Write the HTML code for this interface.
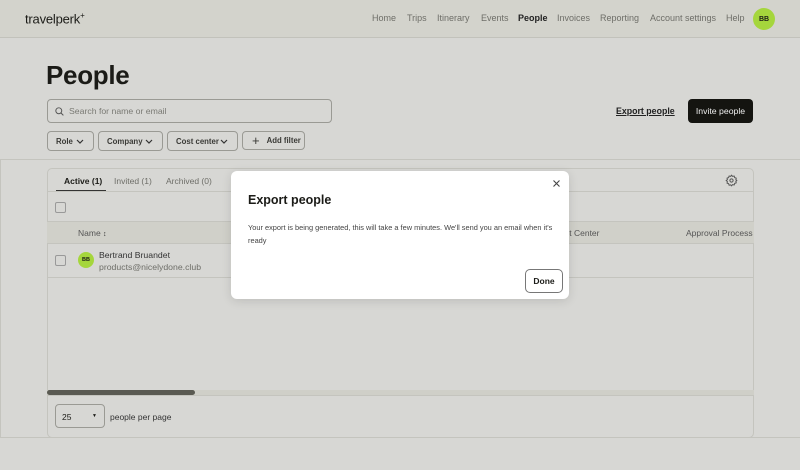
<!DOCTYPE html>
<html><head><style>
*{box-sizing:border-box;margin:0;padding:0}
body{width:800px;height:470px;overflow:hidden;background:#d7d7d4;font-family:"Liberation Sans",sans-serif;color:#1b1b17;position:relative}
.abs{position:absolute}
.hdr{left:0;top:0;width:800px;height:38px;background:#d3d3cc;border-bottom:1px solid #c2c2bb}
.nav{top:13px;font-size:9px;color:#6e6e68}
.btn{border:1px solid #9a9a94;border-radius:4px;font-size:7.8px;font-weight:bold;color:#3a3a36;display:flex;align-items:center}
.chev{margin-left:auto;margin-right:9px}
</style></head><body>
<div class="abs hdr"></div>
<div class="abs" style="left:25px;top:11px;font-size:13px;letter-spacing:-0.2px">travelperk<sup style="font-size:8px">+</sup></div>
<div class="abs nav" style="left:372px">Home</div>
<div class="abs nav" style="left:407px">Trips</div>
<div class="abs nav" style="left:437px">Itinerary</div>
<div class="abs nav" style="left:481px">Events</div>
<div class="abs nav" style="left:518px;color:#222;font-weight:bold">People</div>
<div class="abs nav" style="left:557px">Invoices</div>
<div class="abs nav" style="left:600px">Reporting</div>
<div class="abs nav" style="left:650px">Account settings</div>
<div class="abs nav" style="left:726px">Help</div>
<div class="abs" style="left:753px;top:8px;width:22px;height:22px;border-radius:50%;background:#a5d63c;font-size:7px;font-weight:bold;display:flex;align-items:center;justify-content:center">BB</div>

<div class="abs" style="left:46px;top:60px;font-size:26px;font-weight:bold;letter-spacing:-0.3px">People</div>
<div class="abs" style="left:47px;top:99px;width:285px;height:24px;border:1px solid #9a9a94;border-radius:4px;font-size:8.7px;color:#7a7a74;padding:6px 0 0 21px">Search for name or email
<svg class="abs" style="left:7px;top:7px" width="9" height="9" viewBox="0 0 10 10"><circle cx="4.2" cy="4.2" r="3.3" fill="none" stroke="#555" stroke-width="1.1"/><path d="M6.7 6.7L9.3 9.3" stroke="#555" stroke-width="1.1"/></svg></div>
<div class="abs" style="left:616px;top:106px;font-size:8.8px;font-weight:bold;text-decoration:underline;color:#222">Export people</div>
<div class="abs" style="left:688px;top:99px;width:65px;height:24px;background:#141410;border-radius:4px;color:#eee;font-size:8.7px;display:flex;align-items:center;justify-content:center">Invite people</div>

<div class="abs btn" style="left:47px;top:131px;width:47px;height:20px;padding-left:8px">Role <svg class="chev" width="8" height="5" viewBox="0 0 8 5"><path d="M1 1l3 3 3-3" fill="none" stroke="#333" stroke-width="1.2"/></svg></div>
<div class="abs btn" style="left:98px;top:131px;width:65px;height:20px;padding-left:8px">Company <svg class="chev" width="8" height="5" viewBox="0 0 8 5"><path d="M1 1l3 3 3-3" fill="none" stroke="#333" stroke-width="1.2"/></svg></div>
<div class="abs btn" style="left:167px;top:131px;width:71px;height:20px;padding-left:8px">Cost center <svg class="chev" width="8" height="5" viewBox="0 0 8 5"><path d="M1 1l3 3 3-3" fill="none" stroke="#333" stroke-width="1.2"/></svg></div>
<div class="abs btn" style="left:242px;top:131px;width:63px;height:19px;padding-left:9px"><span style="font-size:13px;font-weight:normal;margin-right:7px">+</span>Add filter</div>

<div class="abs" style="left:0;top:159px;width:800px;height:279px;border-top:1px solid #c4c4be;border-bottom:1px solid #c4c4be;border-left:1px solid #c4c4be"></div>
<div class="abs" style="left:47px;top:168px;width:707px;height:270px;border:1px solid #c4c4be;border-radius:5px"></div>
<div class="abs" style="left:47px;top:191px;width:707px;border-top:1px solid #c4c4be"></div>
<div class="abs" style="left:56px;top:190px;width:50px;border-top:1.5px solid #333"></div>
<div class="abs" style="left:64px;top:176px;font-size:8.5px;font-weight:bold">Active (1)</div>
<div class="abs" style="left:114px;top:176px;font-size:8.5px;color:#6e6e68">Invited (1)</div>
<div class="abs" style="left:166px;top:176px;font-size:8.5px;color:#6e6e68">Archived (0)</div>
<svg class="abs" style="left:725px;top:174px" width="13" height="13" viewBox="0 0 24 24"><path d="M12 2l2 2.5 3-.8.8 3 3 .8-.8 3L22 12l-2 1.5.8 3-3 .8-.8 3-3-.8L12 22l-1.5-2-3 .8-.8-3-3-.8.8-3L2 12l2.5-1.5-.8-3 3-.8.8-3 3 .8z" fill="none" stroke="#555" stroke-width="1.8" stroke-linejoin="round"/><circle cx="12" cy="12" r="3" fill="none" stroke="#555" stroke-width="1.8"/></svg>
<div class="abs" style="left:55px;top:202px;width:11px;height:11px;border:1px solid #999;border-radius:2px"></div>
<div class="abs" style="left:47px;top:221px;width:707px;height:23px;background:#d0d0c9;border-top:1px solid #c4c4be;border-bottom:1px solid #c4c4be"></div>
<div class="abs" style="left:78px;top:228px;font-size:8.5px;color:#555">Name <b style="font-size:7px;color:#333">↕</b></div>
<div class="abs" style="left:565px;top:228px;font-size:8.5px;color:#555">st Center</div>
<div class="abs" style="left:686px;top:228px;font-size:8.5px;color:#555">Approval Process</div>
<div class="abs" style="left:55px;top:255px;width:11px;height:11px;border:1px solid #999;border-radius:2px"></div>
<div class="abs" style="left:78px;top:252px;width:16px;height:16px;border-radius:50%;background:#a5d63c;font-size:5.5px;font-weight:bold;display:flex;align-items:center;justify-content:center">BB</div>
<div class="abs" style="left:99px;top:250px;font-size:8.7px;color:#333">Bertrand Bruandet</div>
<div class="abs" style="left:99px;top:262px;font-size:8.7px;color:#6e6e68">products@nicelydone.club</div>
<div class="abs" style="left:47px;top:277px;width:707px;border-top:1px solid #c4c4be"></div>
<div class="abs" style="left:47px;top:390px;width:707px;height:6px;background:#cfcfc8;border-bottom:1px solid #c4c4be"></div>
<div class="abs" style="left:47px;top:390px;width:148px;height:5px;background:#5a5a52;border-radius:3px"></div>
<div class="abs" style="left:55px;top:404px;width:50px;height:24px;border:1px solid #9a9a94;border-radius:4px;font-size:8.5px;padding:7px 0 0 6px">25<span class="abs" style="left:36px;top:8px;font-size:5px">▼</span></div>
<div class="abs" style="left:110px;top:412px;font-size:8.5px;color:#333">people per page</div>

<div class="abs" style="left:231px;top:171px;width:338px;height:128px;background:#fff;border-radius:6px;box-shadow:0 2px 10px rgba(0,0,0,.12)"></div>
<div class="abs" style="left:248px;top:193px;font-size:12.5px;font-weight:bold">Export people</div>
<svg class="abs" style="left:553px;top:180px" width="7" height="7" viewBox="0 0 7 7"><path d="M0.5 0.5l6 6M6.5 0.5l-6 6" stroke="#444" stroke-width="1.1"/></svg>
<div class="abs" style="left:248px;top:221px;width:310px;font-size:7.4px;line-height:13px;color:#444">Your export is being generated, this will take a few minutes. We'll send you an email when it's ready</div>
<div class="abs" style="left:525px;top:269px;width:38px;height:24px;border:1px solid #777;border-radius:5px;font-size:8.5px;font-weight:bold;display:flex;align-items:center;justify-content:center">Done</div>
</body></html>
